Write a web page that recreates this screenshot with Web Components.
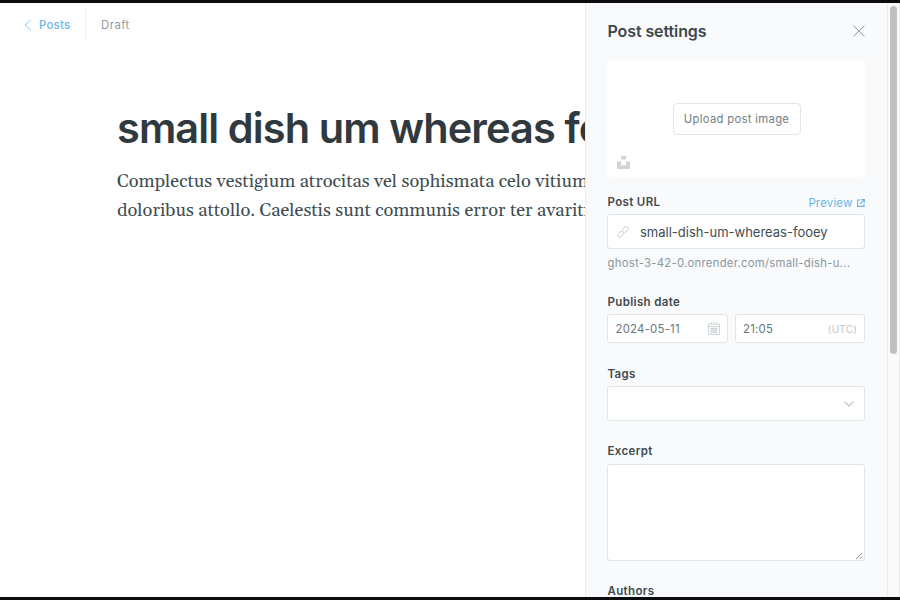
<!DOCTYPE html>
<html lang="en">
<head>
<meta charset="utf-8">
<title>Post editor</title>
<style>
  html, body { margin: 0; height: 100%; overflow: hidden; background: #fff; }
  body { font-family: Inter, "Liberation Sans", sans-serif; color: #394047; -webkit-font-smoothing: antialiased; }
</style>
</head>
<body>
<ghost-app></ghost-app>
<script>
const define = (name, html) => customElements.define(name, class extends HTMLElement {
  constructor() {
    super();
    const t = document.createElement('template');
    t.innerHTML = html;
    this.attachShadow({ mode: 'open' }).append(t.content.cloneNode(true));
  }
});

define('editor-header', `
<style>
  :host { display: flex; align-items: center; height: 32px; padding: 6px 0 0 24px; font-size: 11.4px; line-height: 16px; }
  svg { width: 8px; height: 12px; margin-right: 7px; }
  .back { display: flex; align-items: center; box-sizing: border-box; width: 62px; height: 32px; border-right: 1px solid #e9f1f7; color: #6fb6e8; font-weight: 500; letter-spacing: .25px; }
  .status { margin-left: 15px; color: #8e9ba2; letter-spacing: .45px; }
</style>
<div class="back"><svg viewBox="0 0 8 12" fill="none" stroke="#83c2ee" stroke-width=".9"><path d="M7 .7 1 6l6 5.3"/></svg><slot name="back"></slot></div>
<div class="status"><slot name="status"></slot></div>`);

define('post-body', `
<style>
  :host { display: block; padding: 61px 0 0 117px; white-space: nowrap; }
  h1 { margin: 0; height: 52px; line-height: 52px; font-size: 41.5px; font-weight: 600; letter-spacing: -.9px; color: #303a3e; }
  .text { margin-top: 13px; font: 18.28px/29px Georgia, Gelasio, "Liberation Serif", serif; color: #414d52; }
</style>
<h1><slot name="title"></slot></h1>
<div class="text"><slot></slot></div>`);

define('upload-box', `
<style>
  :host { display: grid; position: relative; box-sizing: border-box; height: 117px; place-items: center; background: #fff; border-radius: 3px; }
  button { box-sizing: border-box; width: 128px; height: 32px; margin: 1px 0 0 1px; padding: 0; border: 1px solid #dfe8ec; border-radius: 4px; background: #fff; font: 400 11.3px/16px Inter, sans-serif; letter-spacing: .3px; color: #738087; white-space: nowrap; }
  svg { position: absolute; left: 10px; bottom: 8px; width: 13px; height: 13px; }
</style>
<button><slot></slot></button>
<svg viewBox="0 0 13 13" fill="#d4d4d4"><path d="M4 0h5v3.5H4zM0 5.5h4v3.7h5V5.5h4V13H0z"/></svg>`);

define('field-group', `
<style>
  :host { display: block; }
  .label { display: flex; justify-content: space-between; height: 16px; line-height: 16px; padding-left: .5px; font-size: 11.5px; font-weight: 600; letter-spacing: .35px; color: #3f4a4f; margin-bottom: var(--label-gap, 4px); }
  .row { display: flex; gap: 7px; }
</style>
<div class="label"><slot name="label"></slot><slot name="action"></slot></div>
<div class="row"><slot></slot></div>`);

define('preview-link', `
<style>
  :host { display: flex; align-items: center; font-size: 11.4px; font-weight: 400; letter-spacing: .2px; color: #6cb4e6; padding: 1px .5px 0 0; }
  svg { width: 8px; height: 8px; margin-left: 4px; }
</style>
<slot></slot><svg viewBox="0 0 8 8" fill="none" stroke="#6cb4e6" stroke-width="1.1"><path d="M3.4 1H.6v6.4H7V4.8M4.4.6h3v3M7.2.8 3 5"/></svg>`);

define('field-box', `
<style>
  :host { display: flex; align-items: center; flex: 1; box-sizing: border-box; height: 35px; padding: 0 8px; background: #fff; border: 1px solid #dce6eb; border-radius: 3px; position: relative; color: #69767c; font-size: 11.4px; white-space: nowrap; }
  .end { margin-left: auto; display: flex; }
</style>
<slot name="start"></slot><slot></slot><span class="end"><slot name="end"></slot></span>`);

define('ui-icon', `
<style>
  :host { display: block; }
  svg { display: none; }
  :host([name="link"]) .link, :host([name="calendar"]) .calendar, :host([name="chevron"]) .chevron, :host([name="close"]) .close, :host([name="resize"]) .resize { display: block; }
</style>
<svg class="link" width="14" height="14" viewBox="0 0 14 14" fill="none" stroke="#cfdce3" stroke-width="1" stroke-linecap="round"><rect x="-3.4" y="-1.9" width="6.8" height="3.8" rx="1.9" transform="translate(4.5 9.3) rotate(-45)"/><rect x="-3.4" y="-1.9" width="6.8" height="3.8" rx="1.9" transform="translate(9.3 4.5) rotate(-45)"/></svg>
<svg class="calendar" width="12" height="13" viewBox="0 0 12 13" fill="none" stroke="#c3cccf" stroke-width=".8"><path d="M.5 2h11v10.5H.5zM.5 4.6h11M3 .3v2.4M6 .3v2.4M9 .3v2.4M2.4 6.5h7.3M2.4 8.5h7.3M2.4 10.5h7.3M3.8 5.8v5.4M6 5.8v5.4M8.2 5.8v5.4"/></svg>
<svg class="chevron" width="10" height="6" viewBox="0 0 10 6" fill="none" stroke="#bfcbd1" stroke-width="1.3" stroke-linecap="round"><path d="m1 1 4 4 4-4"/></svg>
<svg class="close" width="12" height="12" viewBox="0 0 12 12" fill="none" stroke="#878c90" stroke-width=".9"><path d="m.4.5 11 11M11.4.5l-11 11"/></svg>
<svg class="resize" width="8" height="8" viewBox="0 0 8 8" fill="none" stroke="#858585" stroke-width=".9"><path d="m1 7 6-6M4.5 7 7 4.5"/></svg>`);

define('settings-panel', `
<style>
  :host { display: block; box-sizing: border-box; width: 302px; height: 594px; overflow: hidden; padding: 0 22px 0 21px; background: #f9fafc; border-left: 1px solid #e5ebef; }
  header { display: flex; justify-content: space-between; align-items: center; box-sizing: border-box; height: 57px; padding: 0 0 1.5px .5px; }
  h2 { margin: 0; font-size: 16px; line-height: 20px; font-weight: 600; letter-spacing: -.1px; color: #3c474c; }
  .url { margin-top: 17px; }
  .hint { height: 16px; margin-top: 5.5px; padding: 0 0 .5px .5px; font-size: 11.3px; line-height: 16px; letter-spacing: .27px; color: #8a989f; white-space: nowrap; }
  .date, .tags { margin-top: 23px; } .excerpt, .authors { margin-top: 22px; }
  .excerpt { --label-gap: 5px; }
  .slug { color: #414d52; font-size: 13px; letter-spacing: 0; margin-left: 10px; }
  .d { height: 29px; flex: 0 0 121px; letter-spacing: .22px; padding: 0 7px 0 7.5px; }
  .t { height: 29px; letter-spacing: .22px; padding: 0 7px; }
  .utc { font-size: 10px; letter-spacing: .2px; color: #bcc6ca; }
  .area { height: 97px; }
  .area ui-icon { position: absolute; right: 1px; bottom: 0; }
</style>
<header><h2>Post settings</h2><ui-icon name="close"></ui-icon></header>
<upload-box>Upload post image</upload-box>
<field-group class="url"><span slot="label">Post URL</span><preview-link slot="action">Preview</preview-link>
  <field-box><ui-icon slot="start" name="link"></ui-icon><span class="slug">small-dish-um-whereas-fooey</span></field-box></field-group>
<div class="hint">ghost-3-42-0.onrender.com/small-dish-u...</div>
<field-group class="date"><span slot="label">Publish date</span>
  <field-box class="d">2024-05-11<ui-icon slot="end" name="calendar"></ui-icon></field-box>
  <field-box class="t">21:05<span slot="end" class="utc">(UTC)</span></field-box></field-group>
<field-group class="tags"><span slot="label">Tags</span>
  <field-box><ui-icon slot="end" name="chevron" style="margin-right:2px"></ui-icon></field-box></field-group>
<field-group class="excerpt"><span slot="label">Excerpt</span>
  <field-box class="area"><ui-icon slot="end" name="resize"></ui-icon></field-box></field-group>
<field-group class="authors"><span slot="label">Authors</span></field-group>`);

define('scroll-bar', `
<style>
  :host { display: block; box-sizing: border-box; width: 13px; height: 594px; padding: 2.5px 0 0 2px; background: #fafafa; border-left: 1px solid #ececee; border-right: 1px solid #ececec; }
  div { width: 7px; height: 348.5px; border-radius: 4px; background: #c1c1c1; }
</style><div></div>`);

define('ghost-app', `
<style>
  :host { display: flex; box-sizing: border-box; width: 900px; height: 600px; border: solid #0c0c0e; border-width: 3px 0; background: #fff; overflow: hidden; }
  main { width: 585px; overflow: hidden; flex: none; }
  settings-panel, scroll-bar { flex: none; }
</style>
<main>
  <editor-header><span slot="back">Posts</span><span slot="status">Draft</span></editor-header>
  <post-body><span slot="title">small dish um whereas fo</span>Complectus vestigium atrocitas vel sophismata celo vitium<br>doloribus attollo. Caelestis sunt communis error ter avariti</post-body>
</main>
<settings-panel></settings-panel>
<scroll-bar></scroll-bar>`);
</script>
</body>
</html>
